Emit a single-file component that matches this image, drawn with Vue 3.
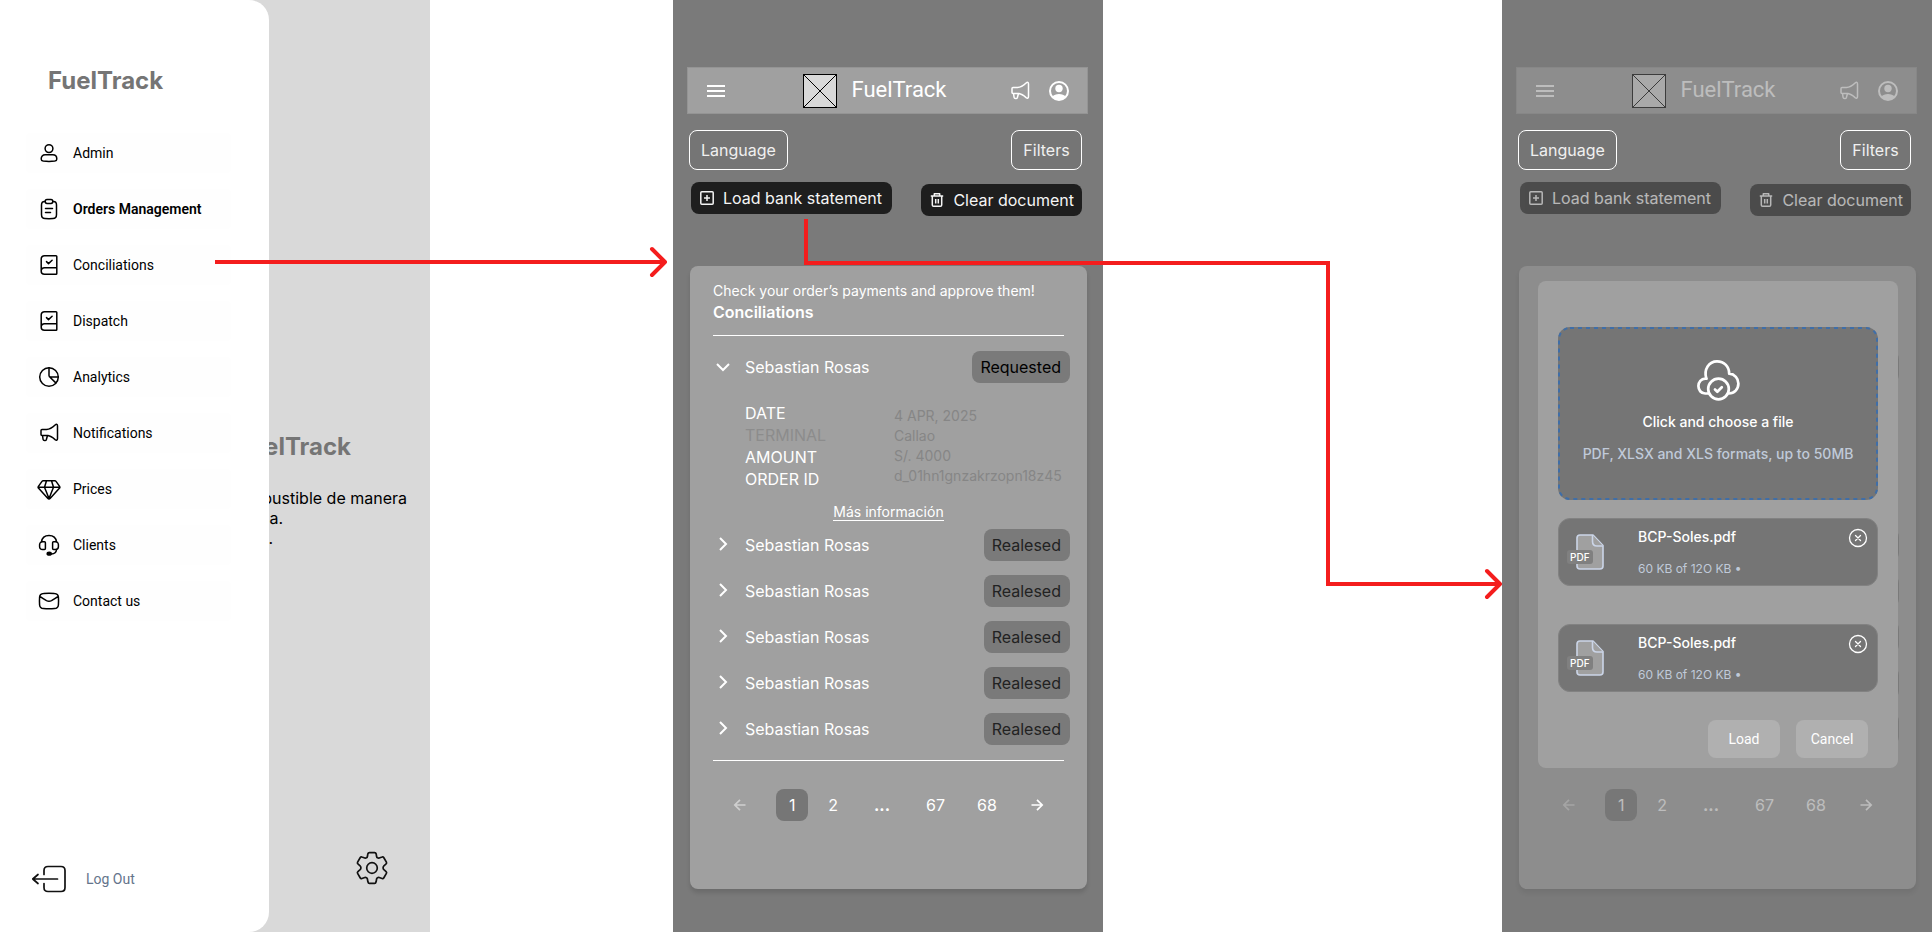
<script setup>
import { ref } from 'vue'

const menu = [
  { label: 'Admin', icon: 'user' },
  { label: 'Orders Management', icon: 'clipboard', active: true },
  { label: 'Conciliations', icon: 'book' },
  { label: 'Dispatch', icon: 'book' },
  { label: 'Analytics', icon: 'pie' },
  { label: 'Notifications', icon: 'megaphone' },
  { label: 'Prices', icon: 'diamond' },
  { label: 'Clients', icon: 'headset' },
  { label: 'Contact us', icon: 'mail' }
]

const icons = {
  user: '<circle cx="12" cy="7.6" r="3.9"/><path d="M8.2 13.8h7.6c2.6 0 4 1.8 4 4.1 0 1.3-.8 2-2 2.2-3.600.5-8 .5-11.600 0-1.200-.2-2-.9-2-2.200 0-2.300 1.400-4.100 4-4.100z"/>',
  clipboard: '<path d="M8.200 4.500H7.500C5.300 4.500 4.500 5.800 4.500 8v9.500c0 2.600 1 4 3.500 4 2.600.2 5.400.2 8 0 2.500 0 3.500-1.400 3.500-4V8c0-2.200-.8-3.500-3-3.500h-.7"/><path d="M10 2.600h4c1 0 1.800.8 1.800 1.900s-.8 1.900-1.800 1.900h-4c-1 0-1.800-.8-1.800-1.900s.8-1.900 1.800-1.900zM8.500 11.500h7M8.500 15.500h5"/>',
  book: '<path d="M7.500 2.800H19c.5 0 .8.3.8.8v16.800c0 .5-.3.800-.8.800H7.500c-2 0-3.300-1.200-3.300-3V6c0-2 1.300-3.200 3.300-3.200zM4.200 18c0-2 1.300-3.300 3.300-3.300h12.300M9.500 8.600l2 2 3.600-3.400"/>',
  pie: '<circle cx="12" cy="12" r="9.300"/><path d="M12 2.700V10.500c0 1 .5 1.500 1.500 1.500h7.800M12.500 11.700l6.300 6.200"/>',
  megaphone: '<path d="M5 8.500h4.500c3.200-.2 6-2 8.600-4.500 1.400-1.200 2.400-.8 2.400 1v12.400c0 1.800-1 2.300-2.400 1.200-2.300-2-4.500-3.700-7.100-4.100H5c-.6 0-1-.3-1-.9V9.400c0-.6.4-.9 1-.9zM5.500 14.500l.6 4c.2 1.200 2.800 1.500 3.200.3l1.200-4.300"/>',
  diamond: '<path d="M6.200 3.800h11.600c.5 0 .9.2 1.200.6l3.600 5c.4.600.4 1.100 0 1.700l-9.300 10.200c-.8.9-1.800.9-2.600 0L1.400 11.100c-.4-.6-.4-1.100 0-1.700l3.600-5c.3-.4.7-.6 1.200-.6zM1.500 10.300h21M9.500 3.800L7.500 10.300 12 21.500l4.500-11.200-2-6.500"/>',
  headset: '<path d="M4.500 8.800C5 5 8 2.500 12 2.500S19 5 19.500 8.800M19.600 16.500c-.3 2.600-1.800 4.200-5.100 4.400"/><path d="M4.300 8.800h3.200c.6 0 .9.400.9 1v5.700c0 .6-.4 1-1 1H5.500c-1.800 0-2.900-1-2.900-2.700v-2.300c0-1.200.6-2.100 1.700-2.700zM19.700 8.800h-3.200c-.6 0-.9.400-.9 1v5.700c0 .6.4 1 1 1h1.900c1.800 0 2.900-1 2.900-2.700v-2.300c0-1.200-.6-2.100-1.700-2.700z"/><ellipse cx="12.200" cy="20.700" rx="2" ry="1.400" fill="currentColor"/>',
  mail: '<path d="M6.500 4.500c3.600-.4 7.400-.4 11 0 2.500.2 3.700 1.200 3.900 3.500.2 2.600.2 5.400 0 8-.2 2.300-1.400 3.400-3.900 3.600-3.600.3-7.400.3-11 0-2.500-.2-3.700-1.300-3.900-3.600-.2-2.600-.2-5.400 0-8 .2-2.300 1.400-3.300 3.900-3.500zM2.800 7.400c3 2.100 5.200 3.400 6.700 4.200 1.800.9 3.200.9 5 0 1.500-.8 3.700-2.100 6.700-4.200"/>'
}

const screens = [
  { id: 'list', dialog: false },
  { id: 'upload', dialog: true }
]
const orders = ['Sebastian Rosas', 'Sebastian Rosas', 'Sebastian Rosas', 'Sebastian Rosas', 'Sebastian Rosas']
const details = {
  labels: ['DATE', 'TERMINAL', 'AMOUNT', 'ORDER ID'],
  values: ['4 APR, 2025', 'Callao', 'S/. 4000', 'd_01hn1gnzakrzopn18z45']
}
const files = ref([
  { id: 1, name: 'BCP-Soles.pdf', size: '60 KB of 12O KB •' },
  { id: 2, name: 'BCP-Soles.pdf', size: '60 KB of 12O KB •' }
])
</script>

<template>
  <div class="board">
    <section class="phone home">
      <div class="hero">
        <h2 class="brand">FuelTrack</h2>
        <p class="pitch">
          <span>combustible de manera</span>
          <span class="second">rápida.</span>
          <span class="third">segura.</span>
        </p>
      </div>
      <button class="settings" aria-label="Settings">
        <svg width="36" height="36" viewBox="0 0 36 36" fill="none" stroke="currentColor" stroke-width="1.700" stroke-linejoin="round">
          <circle cx="18" cy="18" r="5.300" />
          <path d="M15.300 2.600h5.400c.8 0 1.200.3 1.400 1.100l.5 2.800c.2 1.200 1.500 1.900 2.600 1.500l2.900-1c.7-.3 1.200-.1 1.600.5l2.700 4.700c.4.700.3 1.200-.3 1.700l-2.200 1.900c-1.100 1-1.100 2.900 0 3.900l2.200 1.900c.6.500.7 1 .3 1.700l-2.700 4.700c-.4.700-.9.800-1.600.5l-2.900-1c-1.100-.4-2.400.4-2.600 1.500l-.5 2.800c-.2.800-.6 1.600-1.400 1.600h-5.400c-.8 0-1.200-.8-1.400-1.600l-.5-2.800c-.2-1.100-1.500-1.900-2.600-1.500l-2.900 1c-.7.300-1.200.2-1.600-.5l-2.700-4.700c-.4-.7-.3-1.200.3-1.700l2.200-1.900c1.100-1 1.100-2.900 0-3.900l-2.200-1.900c-.6-.5-.7-1-.3-1.700l2.700-4.700c.4-.6.9-.8 1.600-.5l2.900 1c1.100.4 2.400-.3 2.600-1.500l.5-2.800c.2-.8.6-1.100 1.400-1.100z" />
        </svg>
      </button>

      <aside class="drawer">
        <h1 class="brand">FuelTrack</h1>
        <nav class="menu">
          <a v-for="item in menu" :key="item.label" href="#" :class="['item', { active: item.active }]">
            <svg width="24" height="24" viewBox="0 0 24 24" fill="none" stroke="currentColor" stroke-width="1.500" stroke-linecap="round" stroke-linejoin="round" v-html="icons[item.icon]"></svg>
            <span>{{ item.label }}</span>
          </a>
        </nav>
        <button class="logout">
          <svg width="36" height="28" viewBox="0 0 36 28" fill="none" stroke="#111" stroke-width="1.700" stroke-linecap="round" stroke-linejoin="round">
            <path d="M13 9.500V5.500c0-2.600 1.300-4 4-4h13c2.700 0 4 1.400 4 4v17c0 2.600-1.300 4-4 4H17c-2.700 0-4-1.400-4-4v-4M26.500 14H2M7 9.500L1.800 14 7 18.500" />
          </svg>
          <span>Log Out</span>
        </button>
      </aside>
    </section>

    <section v-for="screen in screens" :key="screen.id" :class="['phone', 'app', screen.id, { dimmed: screen.dialog }]">
      <header class="topbar fade">
        <button class="icon-btn" aria-label="Menu">
          <svg width="18" height="12" viewBox="0 0 18 12" stroke="currentColor" stroke-width="2">
            <path d="M0 1h18M0 6h18M0 11h18" />
          </svg>
        </button>
        <div class="identity">
          <svg width="34" height="34" viewBox="0 0 34 34" fill="#d9d9d9" stroke="#000">
            <rect x=".5" y=".5" width="33" height="33" />
            <path d="M0 0l34 34M34 0L0 34" />
          </svg>
          <span>FuelTrack</span>
        </div>
        <div class="actions">
          <button class="icon-btn" aria-label="Announcements">
            <svg width="24" height="24" viewBox="0 0 24 24" fill="none" stroke="currentColor" stroke-width="1.500" stroke-linecap="round" stroke-linejoin="round" v-html="icons.megaphone"></svg>
          </button>
          <button class="icon-btn" aria-label="Account">
            <svg width="24" height="24" viewBox="0 0 24 24" fill="none" stroke="currentColor" stroke-width="2">
              <circle cx="12" cy="12" r="9" />
              <circle cx="12" cy="9.500" r="3.700" fill="currentColor" stroke="none" />
              <path d="M5.200 17.800C6.800 15.900 9.200 15 12 15s5.200.9 6.800 2.800C17 20 14.700 21 12 21s-5-1-6.800-3.200z" fill="currentColor" stroke="none" />
            </svg>
          </button>
        </div>
      </header>

      <div class="options">
        <button class="outline">Language</button>
        <button class="outline">Filters</button>
      </div>
      <div class="tools fade">
        <button class="dark load">
          <svg width="16" height="16" viewBox="0 0 16 16" fill="none" stroke="currentColor" stroke-width="1.500" stroke-linejoin="round">
            <rect x="1.800" y="1.800" width="12.400" height="12.400" rx="1" />
            <path d="M8 5v6M5 8h6" />
          </svg>
          Load bank statement
        </button>
        <button class="dark clear">
          <svg width="16" height="16" viewBox="0 0 16 16" fill="none" stroke="currentColor" stroke-width="1.500" stroke-linejoin="round">
            <path d="M1.800 4h12.400M5.300 4V1.700h5.400V4M3.300 4v9c0 .8.500 1.300 1.300 1.300h6.800c.8 0 1.300-.5 1.300-1.300V4M6.700 7v4.500M9.300 7v4.500" />
          </svg>
          Clear document
        </button>
      </div>

      <div class="stage">
        <main class="card fade">
          <p class="lead covered">Check your order’s payments and approve them!</p>
          <h2 class="title covered">Conciliations</h2>
          <hr />
          <div class="row">
            <button class="toggle covered" aria-expanded="true">
              <svg width="24" height="24" viewBox="0 0 24 24" fill="none" stroke="currentColor" stroke-width="2"><path d="M6 9l6 6 6-6" /></svg>
              Sebastian Rosas
            </button>
            <span class="badge requested"><span class="covered">Requested</span></span>
          </div>
          <div class="details covered">
            <ul class="labels">
              <li v-for="label in details.labels" :key="label" :class="{ muted: label === 'TERMINAL' }">{{ label }}</li>
            </ul>
            <ul class="values">
              <li v-for="value in details.values" :key="value">{{ value }}</li>
            </ul>
          </div>
          <p class="more covered"><a href="#">Más información</a></p>
          <div class="rows">
            <div v-for="(name, i) in orders" :key="i" class="row">
              <button class="toggle covered" aria-expanded="false">
                <svg width="24" height="24" viewBox="0 0 24 24" fill="none" stroke="currentColor" stroke-width="2"><path d="M9 5l6 6-6 6" /></svg>
                {{ name }}
              </button>
              <span class="badge"><span class="covered">Realesed</span></span>
            </div>
          </div>
          <hr />
          <nav class="pages">
            <button class="step off" aria-label="Previous">
              <svg width="16" height="16" viewBox="0 0 16 16" fill="none" stroke="currentColor" stroke-width="1.700"><path d="M13.500 8H3M8 2.800L2.800 8 8 13.200" /></svg>
            </button>
            <div class="numbers">
              <button class="current">1</button>
              <button>2</button>
              <span class="dots">...</span>
              <button>67</button>
              <button>68</button>
            </div>
            <button class="step" aria-label="Next">
              <svg width="16" height="16" viewBox="0 0 16 16" fill="none" stroke="currentColor" stroke-width="1.700"><path d="M2.500 8H13M8 2.800L13.200 8 8 13.200" /></svg>
            </button>
          </nav>
        </main>

        <div v-if="screen.dialog" class="dialog" role="dialog" aria-label="Load bank statement">
          <button class="dropzone">
            <svg class="dashes"><rect rx="11" /></svg>
            <svg width="44" height="42" viewBox="0 0 44 42" fill="none" stroke="currentColor" stroke-width="2.700" stroke-linecap="round" stroke-linejoin="round">
              <path d="M12.500 34.500H9.200C5 34.500 2.400 31 2.400 27c0-4 2.800-7.300 6.800-7.300h1.400M10.300 19.700C7.500 10.500 13 2.400 21 2.400c7.300 0 12.200 5.300 12.200 12.300 5.500.5 9.200 4.600 9.200 9.900 0 5.500-4 9.800-9.500 9.900" />
              <circle cx="22.500" cy="30" r="10.300" />
              <path d="M19 30.500l2.300 2.200 4.500-4.500" />
            </svg>
            <strong>Click and choose a file</strong>
            <span class="hint">PDF, XLSX and XLS formats, up to 50MB</span>
          </button>
          <div class="files">
            <article v-for="file in files" :key="file.id" class="file">
              <div class="thumb">
                <svg width="28" height="36" viewBox="0 0 28 36" fill="#a0a0a0" stroke="#cbd5e8" stroke-width="1.600" stroke-linejoin="round">
                  <path d="M4 1h13l10 10.500V32c0 2-1 3-3 3H4c-2 0-3-1-3-3V4c0-2 1-3 3-3z" />
                  <path d="M16.500 1v6.500c0 3 1.500 4.500 4.500 4.500h6" />
                </svg>
                <span class="kind">PDF</span>
              </div>
              <div class="meta">
                <strong>{{ file.name }}</strong>
                <span>{{ file.size }}</span>
              </div>
              <button class="icon-btn" aria-label="Remove">
                <svg width="20" height="20" viewBox="0 0 20 20" fill="none" stroke="currentColor" stroke-width="1.300" stroke-linecap="round"><circle cx="10" cy="10" r="8.500" /><path d="M7.500 7.500l5 5M12.500 7.500l-5 5" /></svg>
              </button>
            </article>
          </div>
          <div class="confirm">
            <button>Load</button>
            <button>Cancel</button>
          </div>
        </div>
      </div>
    </section>

    <svg class="connectors" viewBox="0 0 1932 932" preserveAspectRatio="none" fill="none" stroke="#f41d1d" stroke-width="4">
      <path d="M215 262H665M806 219v44h522v321h172" />
      <path d="M652 249l13 13-13 13M1487 571l13 13-13 13" stroke-linecap="round" stroke-linejoin="round" />
    </svg>
  </div>
</template>

<style>
body {
  background: #fff;
}
</style>

<style scoped>
.board {
  position: relative;
  display: grid;
  grid-template-columns: 430fr 243fr 430fr 399fr 430fr;
  min-height: 100vh;
  font-family: Inter, "Liberation Sans", sans-serif;
  font-size: 16px;
  color: #000;
}
.board * {
  box-sizing: border-box;
}
h1, h2, p, ul {
  margin: 0;
  padding: 0;
  list-style: none;
}
button {
  margin: 0;
  padding: 0;
  border: 0;
  background: none;
  color: inherit;
  font: inherit;
  cursor: pointer;
}
svg {
  display: block;
  flex: none;
}
a {
  color: inherit;
  text-decoration: none;
}
.phone {
  min-width: 0;
}
.list {
  grid-column: 3;
}
.upload {
  grid-column: 5;
}
.connectors {
  position: absolute;
  top: 0;
  left: 0;
  width: 100%;
  height: 932px;
  pointer-events: none;
}

/* Home with drawer */
.home {
  position: relative;
  display: flex;
  flex-direction: column;
  align-items: flex-end;
  background: #d9d9d9;
}
.brand {
  font-size: 24px;
  font-weight: 700;
  line-height: 30px;
  color: #757575;
}
.hero {
  flex: 1;
  display: flex;
  flex-direction: column;
  align-items: flex-end;
  gap: 26px;
  padding: 432px 23px 0 0;
}
.hero .brand {
  padding-right: 56px;
}
.pitch {
  display: flex;
  flex-direction: column;
  align-items: flex-end;
  line-height: 20px;
}
.second {
  padding-right: 124px;
}
.third {
  padding-right: 134px;
}
.settings {
  margin: 0 40px 46px 0;
  color: #111;
}
.drawer {
  position: absolute;
  top: 0;
  bottom: 0;
  left: 0;
  display: flex;
  flex-direction: column;
  width: 269px;
  padding: 66px 38px 39px 26px;
  border-radius: 0 20px 20px 0;
  background: #fff;
  font-family: Roboto, "Liberation Sans", sans-serif;
  font-size: 14px;
}
.drawer .brand {
  padding-left: 22px;
  font-family: Inter, "Liberation Sans", sans-serif;
}
.menu {
  display: flex;
  flex-direction: column;
  gap: 16px;
  padding-top: 37px;
}
.item {
  display: flex;
  align-items: center;
  gap: 12px;
  height: 40px;
  padding-left: 11px;
  border-radius: 4px;
  background: #fefefe;
}
.active {
  font-weight: 600;
}
.logout {
  display: flex;
  align-items: center;
  gap: 19px;
  margin-top: auto;
  padding-left: 5px;
  color: #64748b;
}

/* Conciliations screens */
.app {
  display: flex;
  flex-direction: column;
  padding: 67px 0 43px;
  background: #7a7a7a;
  color: #fff;
}
.dimmed .fade {
  opacity: 0.5;
}
.dimmed .covered {
  visibility: hidden;
}
.topbar {
  display: flex;
  align-items: center;
  justify-content: space-between;
  height: 47px;
  margin: 0 15px 0 14px;
  padding: 0 16px 0 19px;
  border: 1px solid #949494;
  background: #a0a0a0;
}
.identity {
  display: flex;
  align-items: center;
  gap: 14px;
  padding-left: 17px;
  font-family: Roboto, "Liberation Sans", sans-serif;
  font-size: 22px;
}
.identity span {
  padding-bottom: 2px;
}
.actions {
  display: flex;
  gap: 15px;
}
.options {
  display: flex;
  justify-content: space-between;
  padding: 16px 21px 12px 16px;
}
.outline {
  min-width: 71px;
  height: 40px;
  padding: 0 11px;
  border: 1px solid #fff;
  border-radius: 8px;
  background: #757575;
  color: #f0f0f0;
}
.tools {
  display: flex;
  align-items: flex-start;
  justify-content: space-between;
  height: 34px;
  padding: 0 21px 0 18px;
}
.dark {
  display: flex;
  align-items: center;
  gap: 8px;
  height: 32px;
  padding: 0 8px;
  border-radius: 8px;
  background: #1e1e1e;
  color: #f5f5f5;
  white-space: nowrap;
}
.load {
  padding-right: 10px;
}
.clear {
  align-self: flex-end;
}
.stage {
  position: relative;
  flex: 1;
  display: flex;
  flex-direction: column;
  margin: 50px 16px 0 17px;
}
.card {
  flex: 1;
  padding: 15px 17px 64px 23px;
  border-radius: 8px;
  background: #a0a0a0;
  box-shadow: 0 4px 4px rgba(0, 0, 0, 0.12);
}
.lead {
  font-size: 14px;
  line-height: 20px;
}
.title {
  font-size: 16px;
  font-weight: 600;
  line-height: 22px;
}
hr {
  height: 1px;
  margin: 12px 6px 15px 0;
  border: 0;
  background: #fff;
}
.row {
  display: flex;
  align-items: center;
  justify-content: space-between;
}
.toggle {
  display: flex;
  align-items: center;
  gap: 10px;
  margin-left: -2px;
}
.badge {
  padding: 0 9px 0 8px;
  border-radius: 8px;
  background: #7a7a7a;
  color: #222;
  line-height: 32px;
}
.requested {
  color: #000;
}
.details {
  display: grid;
  grid-template-columns: 149px 1fr;
  padding: 19px 0 0 32px;
}
.labels {
  line-height: 22px;
}
.muted {
  color: #8c8c8c;
}
.values {
  padding-top: 4px;
  font-size: 14px;
  line-height: 20px;
  color: #868686;
}
.more {
  display: flex;
  justify-content: center;
  padding: 13px 6px 8px 0;
  font-size: 14px;
  line-height: 17px;
}
.more a {
  border-bottom: 1px solid #fff;
}
.rows {
  display: flex;
  flex-direction: column;
  gap: 14px;
  padding-bottom: 3px;
}
.pages {
  display: flex;
  align-items: center;
  justify-content: center;
  gap: 8px;
  padding: 13px 6px 0 0;
}
.numbers {
  display: flex;
  gap: 8px;
}
.numbers button {
  height: 32px;
  padding: 0 12px;
  border-radius: 8px;
}
.numbers .current {
  width: 32px;
  padding: 0;
  background: #767676;
}
.dots {
  padding: 0 16px;
  font-weight: 700;
  line-height: 32px;
}
.step {
  display: flex;
  justify-content: center;
  width: 40px;
}
.off {
  margin-right: 8px;
  opacity: 0.5;
}

/* Upload dialog */
.dialog {
  position: absolute;
  top: 15px;
  right: 18px;
  left: 19px;
  padding: 46px 20px 10px;
  border-radius: 8px;
  background: #a0a0a0;
  font-size: 14px;
}
.dropzone {
  position: relative;
  display: flex;
  flex-direction: column;
  align-items: center;
  width: 100%;
  height: 173px;
  padding-top: 32px;
  border-radius: 12px;
  background: #757575;
}
.dashes {
  position: absolute;
  top: 0;
  left: 0;
  width: 100%;
  height: 100%;
}
.dashes rect {
  x: 1px;
  y: 1px;
  width: calc(100% - 2px);
  height: calc(100% - 2px);
  fill: none;
  stroke: #3f6ea8;
  stroke-width: 2px;
  stroke-dasharray: 4 4;
}
.dropzone strong {
  padding-top: 11px;
  font-weight: 500;
  line-height: 20px;
}
.hint {
  padding-top: 12px;
  font-weight: 500;
  line-height: 20px;
  color: #c0cad9;
}
.files {
  display: flex;
  flex-direction: column;
  gap: 38px;
  padding: 18px 0 28px;
}
.file {
  display: flex;
  height: 68px;
  padding: 9px 9px 7px 17px;
  border: 1px solid #828282;
  border-radius: 12px;
  background: #757575;
}
.file .icon-btn {
  align-self: flex-start;
}
.thumb {
  position: relative;
  width: 62px;
  padding-top: 6px;
}
.kind {
  position: absolute;
  top: 22px;
  left: -9px;
  padding: 0 3px;
  border-radius: 3px;
  background: #808080;
  font-size: 10px;
  font-weight: 500;
  line-height: 14px;
}
.meta {
  flex: 1;
  display: flex;
  flex-direction: column;
  justify-content: space-between;
}
.meta strong {
  font-weight: 500;
  line-height: 18px;
}
.meta span {
  font-size: 12px;
  line-height: 18px;
  color: #c0cad9;
}
.confirm {
  display: flex;
  justify-content: flex-end;
  gap: 16px;
  padding-right: 10px;
}
.confirm button {
  width: 72px;
  height: 38px;
  border-radius: 8px;
  background: #b0b0b0;
  font-family: Roboto, "Liberation Sans", sans-serif;
}
</style>
